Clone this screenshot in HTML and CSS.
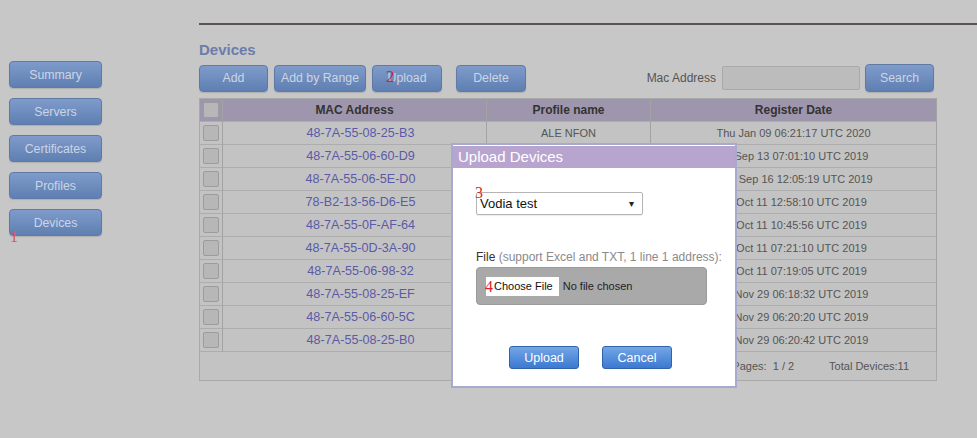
FILE: index.html
```html
<!DOCTYPE html>
<html>
<head>
<meta charset="utf-8">
<title>Devices</title>
<link rel="stylesheet" href="styles.css">
</head>
<body>
<div class="page">
  <nav class="sidebar">
    <button class="btn side">Summary</button>
    <button class="btn side">Servers</button>
    <button class="btn side">Certificates</button>
    <button class="btn side">Profiles</button>
    <button class="btn side">Devices</button>
  </nav>
  <main class="main">
    <div class="rule"></div>
    <h1 class="title">Devices</h1>
    <div class="toolbar">
      <button class="btn tb w-add">Add</button>
      <button class="btn tb w-range">Add by Range</button>
      <button class="btn tb w-up">Upload</button>
      <button class="btn tb w-del">Delete</button>
      <div class="search">
        <label class="search-label">Mac Address</label>
        <input class="search-input" type="text">
        <button class="btn tb w-search">Search</button>
      </div>
    </div>
    <table class="grid">
      <thead>
        <tr><th class="c-chk"><span class="chk"></span></th><th class="c-mac">MAC Address</th><th class="c-prof">Profile name</th><th>Register Date</th></tr>
      </thead>
      <tbody>
        <tr><td class="c-chk"><span class="chk"></span></td><td class="mac">48-7A-55-08-25-B3</td><td>ALE NFON</td><td>Thu Jan 09 06:21:17 UTC 2020</td></tr>
        <tr><td class="c-chk"><span class="chk"></span></td><td class="mac">48-7A-55-06-60-D9</td><td>ALE NFON</td><td>Fri Sep 13 07:01:10 UTC 2019</td></tr>
        <tr><td class="c-chk"><span class="chk"></span></td><td class="mac">48-7A-55-06-5E-D0</td><td>ALE NFON</td><td>Mon Sep 16 12:05:19 UTC 2019</td></tr>
        <tr><td class="c-chk"><span class="chk"></span></td><td class="mac">78-B2-13-56-D6-E5</td><td>Vodia</td><td>Fri Oct 11 12:58:10 UTC 2019</td></tr>
        <tr><td class="c-chk"><span class="chk"></span></td><td class="mac">48-7A-55-0F-AF-64</td><td>Vodia</td><td>Fri Oct 11 10:45:56 UTC 2019</td></tr>
        <tr><td class="c-chk"><span class="chk"></span></td><td class="mac">48-7A-55-0D-3A-90</td><td>Vodia</td><td>Fri Oct 11 07:21:10 UTC 2019</td></tr>
        <tr><td class="c-chk"><span class="chk"></span></td><td class="mac">48-7A-55-06-98-32</td><td>Vodia</td><td>Fri Oct 11 07:19:05 UTC 2019</td></tr>
        <tr><td class="c-chk"><span class="chk"></span></td><td class="mac">48-7A-55-08-25-EF</td><td>Vodia</td><td>Fri Nov 29 06:18:32 UTC 2019</td></tr>
        <tr><td class="c-chk"><span class="chk"></span></td><td class="mac">48-7A-55-06-60-5C</td><td>Vodia</td><td>Fri Nov 29 06:20:20 UTC 2019</td></tr>
        <tr><td class="c-chk"><span class="chk"></span></td><td class="mac">48-7A-55-08-25-B0</td><td>Vodia</td><td>Fri Nov 29 06:20:42 UTC 2019</td></tr>
      </tbody>
      <tfoot>
        <tr><td colspan="4"><div class="foot"><span>Pages:&nbsp; 1 / 2</span><span>Total Devices:11</span></div></td></tr>
      </tfoot>
    </table>
  </main>
</div>

<div class="modal">
  <div class="modal-head">Upload Devices</div>
  <div class="modal-body">
    <div class="select"><span>Vodia test</span><span class="arrow">&#9662;</span></div>
    <p class="file-label"><span class="dark">File</span> (support Excel and TXT, 1 line 1 address):</p>
    <div class="filebox"><span class="choose">Choose File</span><span class="nofile">No file chosen</span></div>
    <div class="modal-actions">
      <button class="mbtn">Upload</button>
      <button class="mbtn">Cancel</button>
    </div>
  </div>
</div>

<span class="mark m1">1</span>
<span class="mark m2">2</span>
<span class="mark m3">3</span>
<span class="mark m4">4</span>
</body>
</html>
```

FILE: styles.css
```css
* { box-sizing: border-box; }
html, body { margin: 0; padding: 0; }
body {
  background: #c7c7c7;
  font-family: "Liberation Sans", Arial, sans-serif;
  color: #555;
  width: 977px;
  height: 438px;
  overflow: hidden;
  position: relative;
}
.page { display: flex; }
.sidebar {
  width: 199px;
  padding: 61px 0 0 9px;
  display: flex;
  flex-direction: column;
  gap: 10px;
}
.btn {
  font-family: "Liberation Sans", Arial, sans-serif;
  font-size: 12.3px;
  color: #ccd5e5;
  background: linear-gradient(#7e9bca, #5f7fb2);
  border: 1px solid #5f7aa5;
  border-radius: 4px;
  height: 27px;
  padding: 0;
  box-shadow: 0 1px 1px rgba(0,0,0,0.12);
}
.side { width: 93px; }
.main { flex: 1; padding-top: 23px; }
.rule { height: 2px; background: #5a5457; }
.title {
  margin: 15px 0 0;
  font-size: 15px;
  line-height: 19px;
  font-weight: bold;
  color: #6a7dab;
}
.toolbar {
  margin-top: 5px;
  display: flex;
  align-items: center;
  width: 738px;
  height: 28px;
}
.tb { margin-right: 6px; }
.w-add { width: 69px; }
.w-range { width: 92px; }
.w-up { width: 70px; margin-right: 14px; }
.w-del { width: 70px; }
.search { margin-left: auto; display: flex; align-items: center; margin-right: 3px; }
.search-label { font-size: 12px; color: #555; margin-right: 6px; }
.search-input {
  width: 138px; height: 24px;
  background: #bcbcbc;
  border: 1px solid #a9a9a9;
  border-radius: 2px;
  margin-right: 5px;
}
.w-search { width: 69px; height: 28px; margin-right: 0; }
.grid {
  margin-top: 6px;
  width: 738px;
  border-collapse: collapse;
  border: 1px solid #a9a9a9;
  font-size: 11px;
}
.grid th {
  background: #9e96ad;
  height: 23px;
  color: #333;
  font-weight: bold;
  font-size: 12px;
  border-right: 1px solid #a3a3a3;
  padding: 0;
}
.grid td {
  height: 23px;
  padding: 0;
  text-align: center;
  color: #555;
  border-top: 1px solid #adadad;
  border-right: 1px solid #a3a3a3;
  background: #c3c3c3;
}
.c-chk { width: 23px; }
.c-mac { width: 264px; }
.c-prof { width: 164px; }
.grid td.mac { color: #5a5aa8; font-size: 12.6px; padding-left: 12px; }
.chk {
  display: block;
  width: 16px; height: 16px;
  margin: 0 0 0 3px;
  background: #b7b7b7;
  border: 1px solid #9c9c9c;
  border-radius: 2px;
}
.grid tfoot td { height: 29px; border-right: 0; }
.foot {
  display: flex;
  justify-content: flex-end;
  gap: 35px;
  padding-right: 27px;
  color: #555;
  font-size: 11px;
}
.modal {
  position: absolute;
  left: 451px; top: 143px;
  width: 286px; height: 245px;
  background: #fff;
  border: 2px solid #a8a9cf;
}
.modal-head {
  margin-top: 1px;
  height: 22px;
  background: #b8a5cf;
  color: #fff;
  font-size: 15px;
  line-height: 22px;
  padding-left: 5px;
}
.modal-body { padding: 24px 0 0 23px; }
.select {
  width: 167px; height: 23px;
  border: 1px solid #b5b5b5;
  border-radius: 2px;
  display: flex;
  align-items: center;
  justify-content: space-between;
  padding: 0 8px 0 3px;
  font-size: 13px;
  color: #111;
  box-shadow: 0 1px 1px rgba(0,0,0,0.08);
}
.arrow { font-size: 10px; color: #222; }
.file-label {
  margin: 34px 0 0;
  font-size: 12px;
  color: #8a8a8a;
  line-height: 16px;
  white-space: nowrap;
}
.dark { color: #333; }
.filebox {
  margin-top: 2px;
  width: 231px; height: 38px;
  background: #a9a9a9;
  border: 1px solid #9a9a9a;
  border-radius: 4px;
  display: flex;
  align-items: center;
  padding-left: 9px;
  font-size: 11px;
}
.choose { background: #fff; color: #111; padding: 2px 6px 2px 8px; height: 19px; line-height: 15px; }
.nofile { color: #222; margin-left: 4px; }
.modal-actions { display: flex; gap: 23px; margin: 41px 0 0 33px; }
.mbtn {
  width: 70px; height: 23px;
  font-family: "Liberation Sans", Arial, sans-serif;
  font-size: 12.5px;
  color: #fff;
  background: linear-gradient(#72a6e6, #3c79d1);
  border: 1px solid #3262a8;
  border-radius: 3px;
  padding: 0;
}
.mark {
  position: absolute;
  color: #e0262a;
  font-family: "Liberation Serif", "Times New Roman", serif;
  font-size: 16px;
  line-height: 16px;
}
.m1 { left: 10px; top: 229px; color: #d85a5a; }
.m2 { left: 386px; top: 69px; color: #c92a2a; font-size: 17px; }
.m3 { left: 475px; top: 185px; }
.m4 { left: 485px; top: 279px; }
```
